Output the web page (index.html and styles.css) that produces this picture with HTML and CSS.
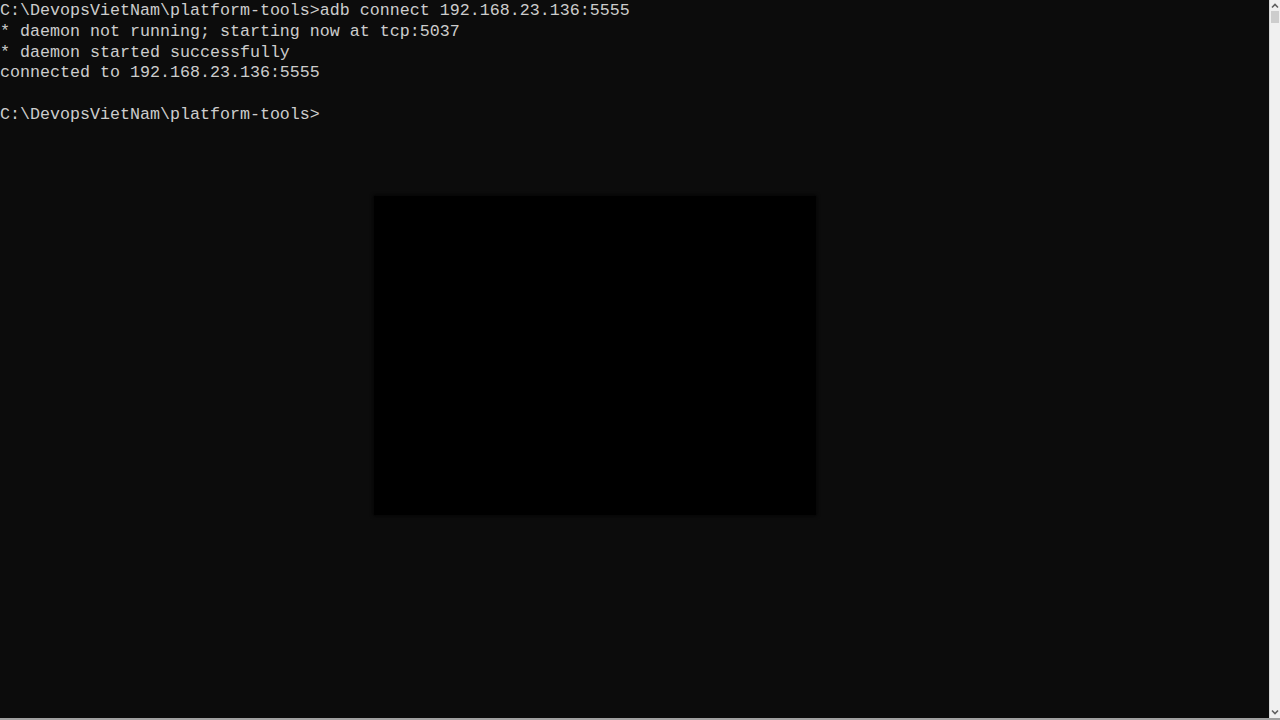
FILE: index.html
```html
<!DOCTYPE html>
<html>
  <head>
    <title>Command Prompt</title>
    <link rel="stylesheet" href="styles.css">
  </head>
  <body>
    <div class="window">
      <div class="console">
        <pre class="output">C:\DevopsVietNam\platform-tools&gt;adb connect 192.168.23.136:5555
* daemon not running; starting now at tcp:5037
* daemon started successfully
connected to 192.168.23.136:5555

C:\DevopsVietNam\platform-tools&gt;</pre>
        <div class="blackout"></div>
      </div>
      <div class="scrollbar">
        <svg class="arrow" width="10" height="10" viewBox="0 0 10 10">
          <path d="M2 7 L5 4 L8 7" fill="none" stroke="#606060" stroke-width="1.6"/>
        </svg>
        <div class="thumb"></div>
        <div class="track"></div>
        <svg class="arrow" width="10" height="10" viewBox="0 0 10 10">
          <path d="M2 3 L5 6 L8 3" fill="none" stroke="#606060" stroke-width="1.6"/>
        </svg>
      </div>
    </div>
  </body>
</html>
```
FILE: styles.css
```css
/* cmd window with a blanked-out area */
html, body {
  margin: 0;
  height: 100%;
  background-color: #0c0c0c;
}

.window {
  display: flex;
  height: 718px;
  border-bottom: 2px solid #a0a0a0;
}

.console {
  flex: 1;
  position: relative;
  overflow: hidden;
}

.output {
  margin: 0;
  padding-top: 1px;
  font-family: "Liberation Mono", "DejaVu Sans Mono", monospace;
  font-size: 16.67px;
  line-height: 20.8px;
  color: #cccccc;
  white-space: pre;
}

.blackout {
  position: absolute;
  left: 374px;
  top: 196px;
  width: 442px;
  height: 319px;
  background-color: #000;
  box-shadow: 0 0 3px 1px #050505;
}

.scrollbar {
  width: 10px;
  display: flex;
  flex-direction: column;
  align-items: center;
  background-color: #f0f0f0;
  border-left: 1px solid #dcdcdc;
}

.arrow {
  height: 11px;
  flex: none;
}

.thumb {
  width: 8px;
  height: 12px;
  background-color: #cdcdcd;
  flex: none;
}

.track {
  flex: 1;
}
```
